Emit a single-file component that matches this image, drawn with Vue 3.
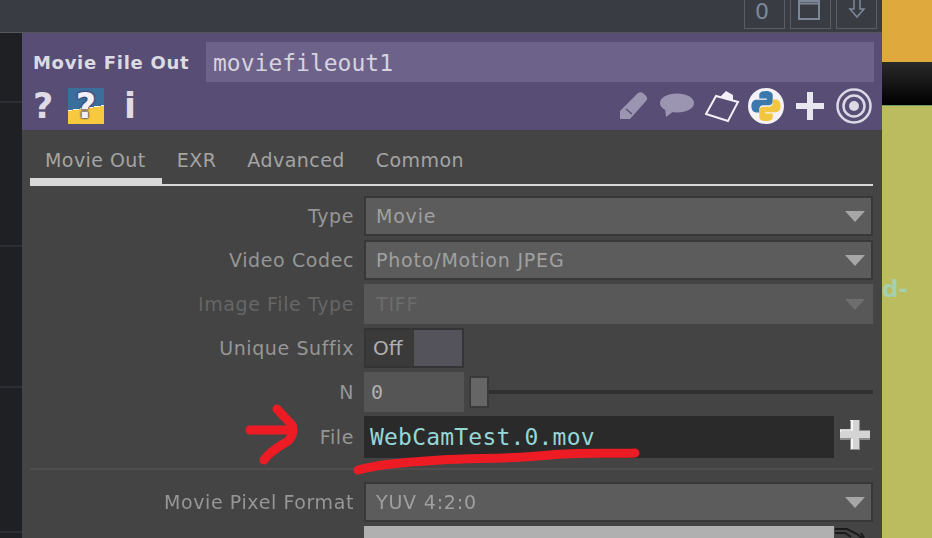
<script setup>
const stripRows = [70, 144, 141, 145]
const tabs = ['Movie Out', 'EXR', 'Advanced', 'Common']
</script>

<template>
  <div class="page">
    <div class="main">
      <div class="topbar">
        <div class="topbtn zero">0</div>
        <div class="topbtn">
          <svg class="win" width="24" height="22" viewBox="0 0 24 22"><path d="M2 1h20v18H2zM2 3.500h20" fill="none" stroke="#7c8898" stroke-width="2" /></svg>
        </div>
        <div class="topbtn top-arrow">
          <svg width="20" height="20" viewBox="0 0 20 20"><path d="M7 0v9H3l7 8 7-8h-4V0" fill="none" stroke="#7c8898" stroke-width="1.500" /></svg>
        </div>
      </div>

      <div class="body">
        <div class="strip">
          <div v-for="(h, i) in stripRows" :key="i" class="strip-row" :style="{ height: h + 'px' }"></div>
        </div>

        <div class="panel">
          <div class="header">
            <div class="name-row">
              <span class="op-type">Movie File Out</span>
              <span class="op-name">moviefileout1</span>
            </div>
            <div class="icon-row">
              <span class="glyph q">?</span>
              <span class="help-box"><span class="glyph">?</span></span>
              <span class="glyph info">i</span>
              <div class="icons-right">
                <svg class="ic" width="30" height="30" viewBox="0 0 30 30">
                  <path d="M1 28V20L18 3c2-2 4-2 6-1l3 3c2 2 1 4 0 5L11 28z" fill="#9c95b1" />
                  <path d="M7 18l6 5" stroke="#574d75" stroke-width="1.500" />
                </svg>
                <svg class="ic" width="36" height="26" viewBox="0 0 36 26">
                  <ellipse cx="18" cy="10" rx="17" ry="9.500" fill="#9c95b1" />
                  <path d="M6 15l1 9 8-6z" fill="#9c95b1" />
                </svg>
                <svg class="ic" width="36" height="34" viewBox="0 0 36 34">
                  <path d="M1 25L11 7 33 13 23 32z" fill="none" stroke="#f2f0f6" stroke-width="2" />
                  <path d="M15 8l6-6 7 4v6z" fill="#f2f0f6" />
                </svg>
                <svg class="ic ic-py" width="36" height="36" viewBox="0 0 24 24">
                  <circle cx="12" cy="12" r="12" fill="#f4f2f7" />
                  <g transform="translate(12 12) scale(1.120) translate(-12 -12)">
                    <path d="M12 3C8.500 3 8 4.500 8 5.500V7.500H12.500V8.300H6.200C4.500 8.300 3.300 9.800 3.300 12C3.300 14.300 4.500 15.800 6.200 15.800H8V13.800C8 12.500 9 11.500 10.300 11.500H13.800C15 11.500 16 10.500 16 9.300V5.500C16 4 14.500 3 12 3Z" fill="#3a78ae" />
                    <path transform="rotate(180 12 12)" d="M12 3C8.500 3 8 4.500 8 5.500V7.500H12.500V8.300H6.200C4.500 8.300 3.300 9.800 3.300 12C3.300 14.300 4.500 15.800 6.200 15.800H8V13.800C8 12.500 9 11.500 10.300 11.500H13.800C15 11.500 16 10.500 16 9.300V5.500C16 4 14.500 3 12 3Z" fill="#f3c63f" />
                  </g>
                </svg>
                <svg class="ic ic-wide" width="28" height="28" viewBox="0 0 28 28">
                  <path d="M14 0v28M0 14h28" stroke="#e8e6ee" stroke-width="6" />
                </svg>
                <svg class="ic ic-wide" width="36" height="36" viewBox="0 0 36 36">
                  <circle cx="18" cy="18" r="16.500" fill="none" stroke="#dcd9e6" stroke-width="2.500" />
                  <circle cx="18" cy="18" r="10.500" fill="none" stroke="#dcd9e6" stroke-width="2.500" />
                  <circle cx="18" cy="18" r="5" fill="#dcd9e6" />
                </svg>
              </div>
            </div>
          </div>

          <div class="tabs">
            <span v-for="(t, i) in tabs" :key="t" class="tab" :class="{ active: i === 0 }">{{ t }}</span>
          </div>

          <div class="params">
            <div class="row">
              <span class="label">Type</span>
              <div class="menu"><span>Movie</span><i class="caret"></i></div>
            </div>
            <div class="row">
              <span class="label">Video Codec</span>
              <div class="menu"><span>Photo/Motion JPEG</span><i class="caret"></i></div>
            </div>
            <div class="row disabled">
              <span class="label">Image File Type</span>
              <div class="menu"><span>TIFF</span><i class="caret"></i></div>
            </div>
            <div class="row">
              <span class="label">Unique Suffix</span>
              <div class="toggle"><span>Off</span><i class="knob"></i></div>
            </div>
            <div class="row">
              <span class="label">N</span>
              <div class="slider">
                <span class="num">0</span>
                <i class="handle"></i>
                <i class="track"></i>
              </div>
            </div>
            <div class="row">
              <span class="label">File</span>
              <div class="file-wrap">
                <div class="file">WebCamTest.0.mov</div>
                <svg class="file-plus" width="30" height="30" viewBox="0 0 30 30">
                  <path d="M10 0h10v10h10v10H20v10H10V20H0V10h10z" fill="#8c8c8c" />
                  <path d="M11 0h8v11h11v7H19v11h-8V18H0v-7h11z" fill="#d4d4d4" />
                  <path d="M10 0h2v10H0v2M12 19v10" fill="none" stroke="#fff" stroke-width="1.500" />
                </svg>
              </div>
            </div>
            <div class="divider"></div>
            <div class="row">
              <span class="label">Movie Pixel Format</span>
              <div class="menu"><span>YUV 4:2:0</span><i class="caret"></i></div>
            </div>
            <div class="row">
              <span class="label"></span>
              <div class="file-wrap">
                <div class="light"></div>
                <svg class="cursor" width="34" height="12" viewBox="0 0 34 12">
                  <path d="M1 3h12l10 5 5 4M1 7h10l6 4M27 7l3 5" fill="none" stroke="#1a1a1a" stroke-width="2" />
                </svg>
              </div>
            </div>
          </div>
        </div>
      </div>
    </div>

    <div class="side">
      <div class="orange"></div>
      <div class="blackbar"></div>
      <div class="olive"><span>d-</span></div>
    </div>

    <!-- red hand-drawn annotation on top of the screenshot -->
    <svg class="annot" width="932" height="538" viewBox="0 0 932 538">
      <path d="M250 430H288C292 430 294 427 291 424L277 409M291 424C294 430 293 436 288 441C280 446 270 451 264 460" fill="none" stroke="#ed1c24" stroke-width="9" stroke-linecap="round" stroke-linejoin="round" />
      <path d="M358 470C380 464 410 462 440 460C480 458 510 459 550 455C580 452 610 454 635 453" fill="none" stroke="#ed1c24" stroke-width="9" stroke-linecap="round" />
    </svg>
  </div>
</template>

<style>
body {
  margin: 0;
  background: #444;
}
</style>

<style scoped>
.page {
  position: relative;
  display: flex;
  width: 932px;
  height: 538px;
  overflow: hidden;
  font-family: "DejaVu Sans", sans-serif;
}
.main {
  flex: none;
  width: 882px;
  height: 538px;
  display: flex;
  flex-direction: column;
  filter: blur(0.4px);
}
.topbar {
  flex: none;
  height: 33px;
  box-sizing: border-box;
  padding: 0 5px 3px 0;
  border-bottom: 1px solid #56575b;
  background: #3a3c43;
  display: flex;
  justify-content: flex-end;
  gap: 5px;
}
.topbtn {
  width: 41px;
  box-sizing: border-box;
  border: 1px solid #5a5d62;
  border-top: none;
  display: flex;
  align-items: center;
  justify-content: center;
  color: #7c8898;
  font-size: 21px;
  overflow: hidden;
}
.zero {
  align-items: flex-start;
  padding-right: 5px;
  font-size: 22px;
  line-height: 24px;
}
.win {
  margin: -6px 3px 0 0;
}
.top-arrow {
  align-items: flex-start;
}
.body {
  flex: 1;
  min-height: 0;
  display: flex;
}
.strip {
  width: 22px;
  background: #1f2024;
}
.strip-row {
  box-sizing: border-box;
  border-bottom: 2px solid #2d2d35;
}
.panel {
  flex: 1;
  background: #444444;
}
.header {
  height: 97px;
  box-sizing: border-box;
  background: #574d75;
  padding: 9px 8px 0 11px;
}
.name-row {
  display: flex;
  align-items: center;
  height: 40px;
}
.op-type {
  width: 173px;
  font-size: 18px;
  font-weight: bold;
  letter-spacing: 0.700px;
  white-space: nowrap;
  color: #dcdae2;
}
.op-name {
  flex: 1;
  height: 40px;
  line-height: 42px;
  padding-left: 7px;
  background: #6c628a;
  color: #d6d3df;
  font-family: "DejaVu Sans Mono", monospace;
  font-size: 23px;
}
.icon-row {
  display: flex;
  align-items: center;
  height: 36px;
  margin-top: 6px;
}
.glyph {
  font-weight: bold;
  font-size: 35px;
  line-height: 36px;
  color: #dedbe5;
}
.q {
  width: 35px;
}
.help-box {
  width: 36px;
  height: 36px;
  text-align: center;
  background: linear-gradient(172deg, #3a6f9c 54%, #f8f4e8 54%, #f8f4e8 56%, #f6c93f 56%);
}
.help-box .glyph {
  color: #f2eff6;
  text-shadow: 0 0 2px #40386a, 0 0 2px #40386a, 0 0 2px #40386a;
}
.info {
  margin-left: 20px;
}
.icons-right {
  margin-left: auto;
  padding-right: 2px;
  display: flex;
  align-items: center;
}
.ic + .ic {
  margin-left: 10px;
}
.ic + .ic-py {
  margin-left: 7px;
}
.ic + .ic-wide {
  margin-left: 12px;
}
.tabs {
  flex: none;
  display: flex;
  height: 56px;
  box-sizing: border-box;
  margin: 0 9px 0 8px;
  border-bottom: 2px solid #d8d8d8;
}
.tab {
  padding: 19px 16px 0 15px;
  font-size: 19px;
  letter-spacing: 0.450px;
  color: #a4a4a4;
}
.tab.active {
  box-shadow: inset 0 -6px 0 #d8d8d8;
}
.params {
  padding: 10px 9px 0 0;
  display: flex;
  flex-direction: column;
  gap: 4px;
}
.row {
  flex: none;
  display: grid;
  grid-template-columns: 332px 1fr;
  column-gap: 10px;
  height: 40px;
  align-items: center;
}
.label {
  text-align: right;
  font-size: 19px;
  letter-spacing: 0.600px;
  white-space: nowrap;
  color: #969696;
}
.menu {
  height: 100%;
  box-sizing: border-box;
  border: 2px solid #383838;
  background: #5c5c5c;
  display: flex;
  align-items: center;
  justify-content: space-between;
  padding: 0 6px 0 10px;
  font-size: 19px;
  letter-spacing: 0.800px;
  color: #a0a0a0;
}
.caret {
  width: 0;
  height: 0;
  border-left: 10px solid transparent;
  border-right: 10px solid transparent;
  border-top: 11px solid #a6a6a6;
}
.disabled .label {
  color: #666666;
}
.disabled .menu {
  border-color: #585858;
  background: #585858;
  color: #6c6c6c;
}
.disabled .caret {
  border-top-color: #6e6e6e;
}
.toggle {
  width: 100px;
  height: 100%;
  box-sizing: border-box;
  border: 2px solid #343434;
  background: #3a3a3a;
  display: flex;
  align-items: center;
  justify-content: space-between;
  padding-left: 7px;
  font-size: 20px;
  color: #b0b0b0;
}
.knob {
  width: 48px;
  height: 100%;
  background: #54535c;
}
.slider {
  height: 100%;
  display: flex;
  align-items: center;
}
.num {
  width: 93px;
  height: 100%;
  line-height: 40px;
  padding-left: 7px;
  background: #555555;
  font-family: "DejaVu Sans Mono", monospace;
  font-size: 20px;
  color: #b0b0b0;
}
.handle {
  width: 16px;
  height: 28px;
  margin-left: 5px;
  background: #666666;
  border: 2px solid #3a3a3a;
}
.track {
  flex: 1;
  height: 4px;
  background: #303030;
}
.file-wrap {
  height: 100%;
  display: flex;
  align-items: flex-start;
}
.file {
  width: 464px;
  height: 100%;
  line-height: 42px;
  padding-left: 6px;
  background: #2a2a2a;
  font-family: "DejaVu Sans Mono", monospace;
  font-size: 23px;
  letter-spacing: 0.200px;
  color: #95d6d6;
}
.file-plus {
  margin: 4px 0 0 6px;
}
.divider {
  flex: none;
  height: 2px;
  margin: 8px 0 8px 8px;
  background: #4e4e4e;
}
.light {
  width: 470px;
  height: 100%;
  background: #b0b0b0;
}
.cursor {
  flex: none;
}
.side {
  flex: 1;
  display: flex;
  flex-direction: column;
}
.orange {
  height: 62px;
  background: #e0a93e;
}
.blackbar {
  height: 43px;
  background: linear-gradient(#2a2a2a, #000);
  border-bottom: 1px solid #6f9a66;
}
.olive {
  flex: 1;
  background: #bbbb5f;
  padding-top: 170px;
}
.olive span {
  font-family: "DejaVu Sans", sans-serif;
  font-weight: bold;
  font-size: 23px;
  color: #a3d0b0;
}
.annot {
  position: absolute;
  left: 0;
  top: 0;
  pointer-events: none;
}
</style>
